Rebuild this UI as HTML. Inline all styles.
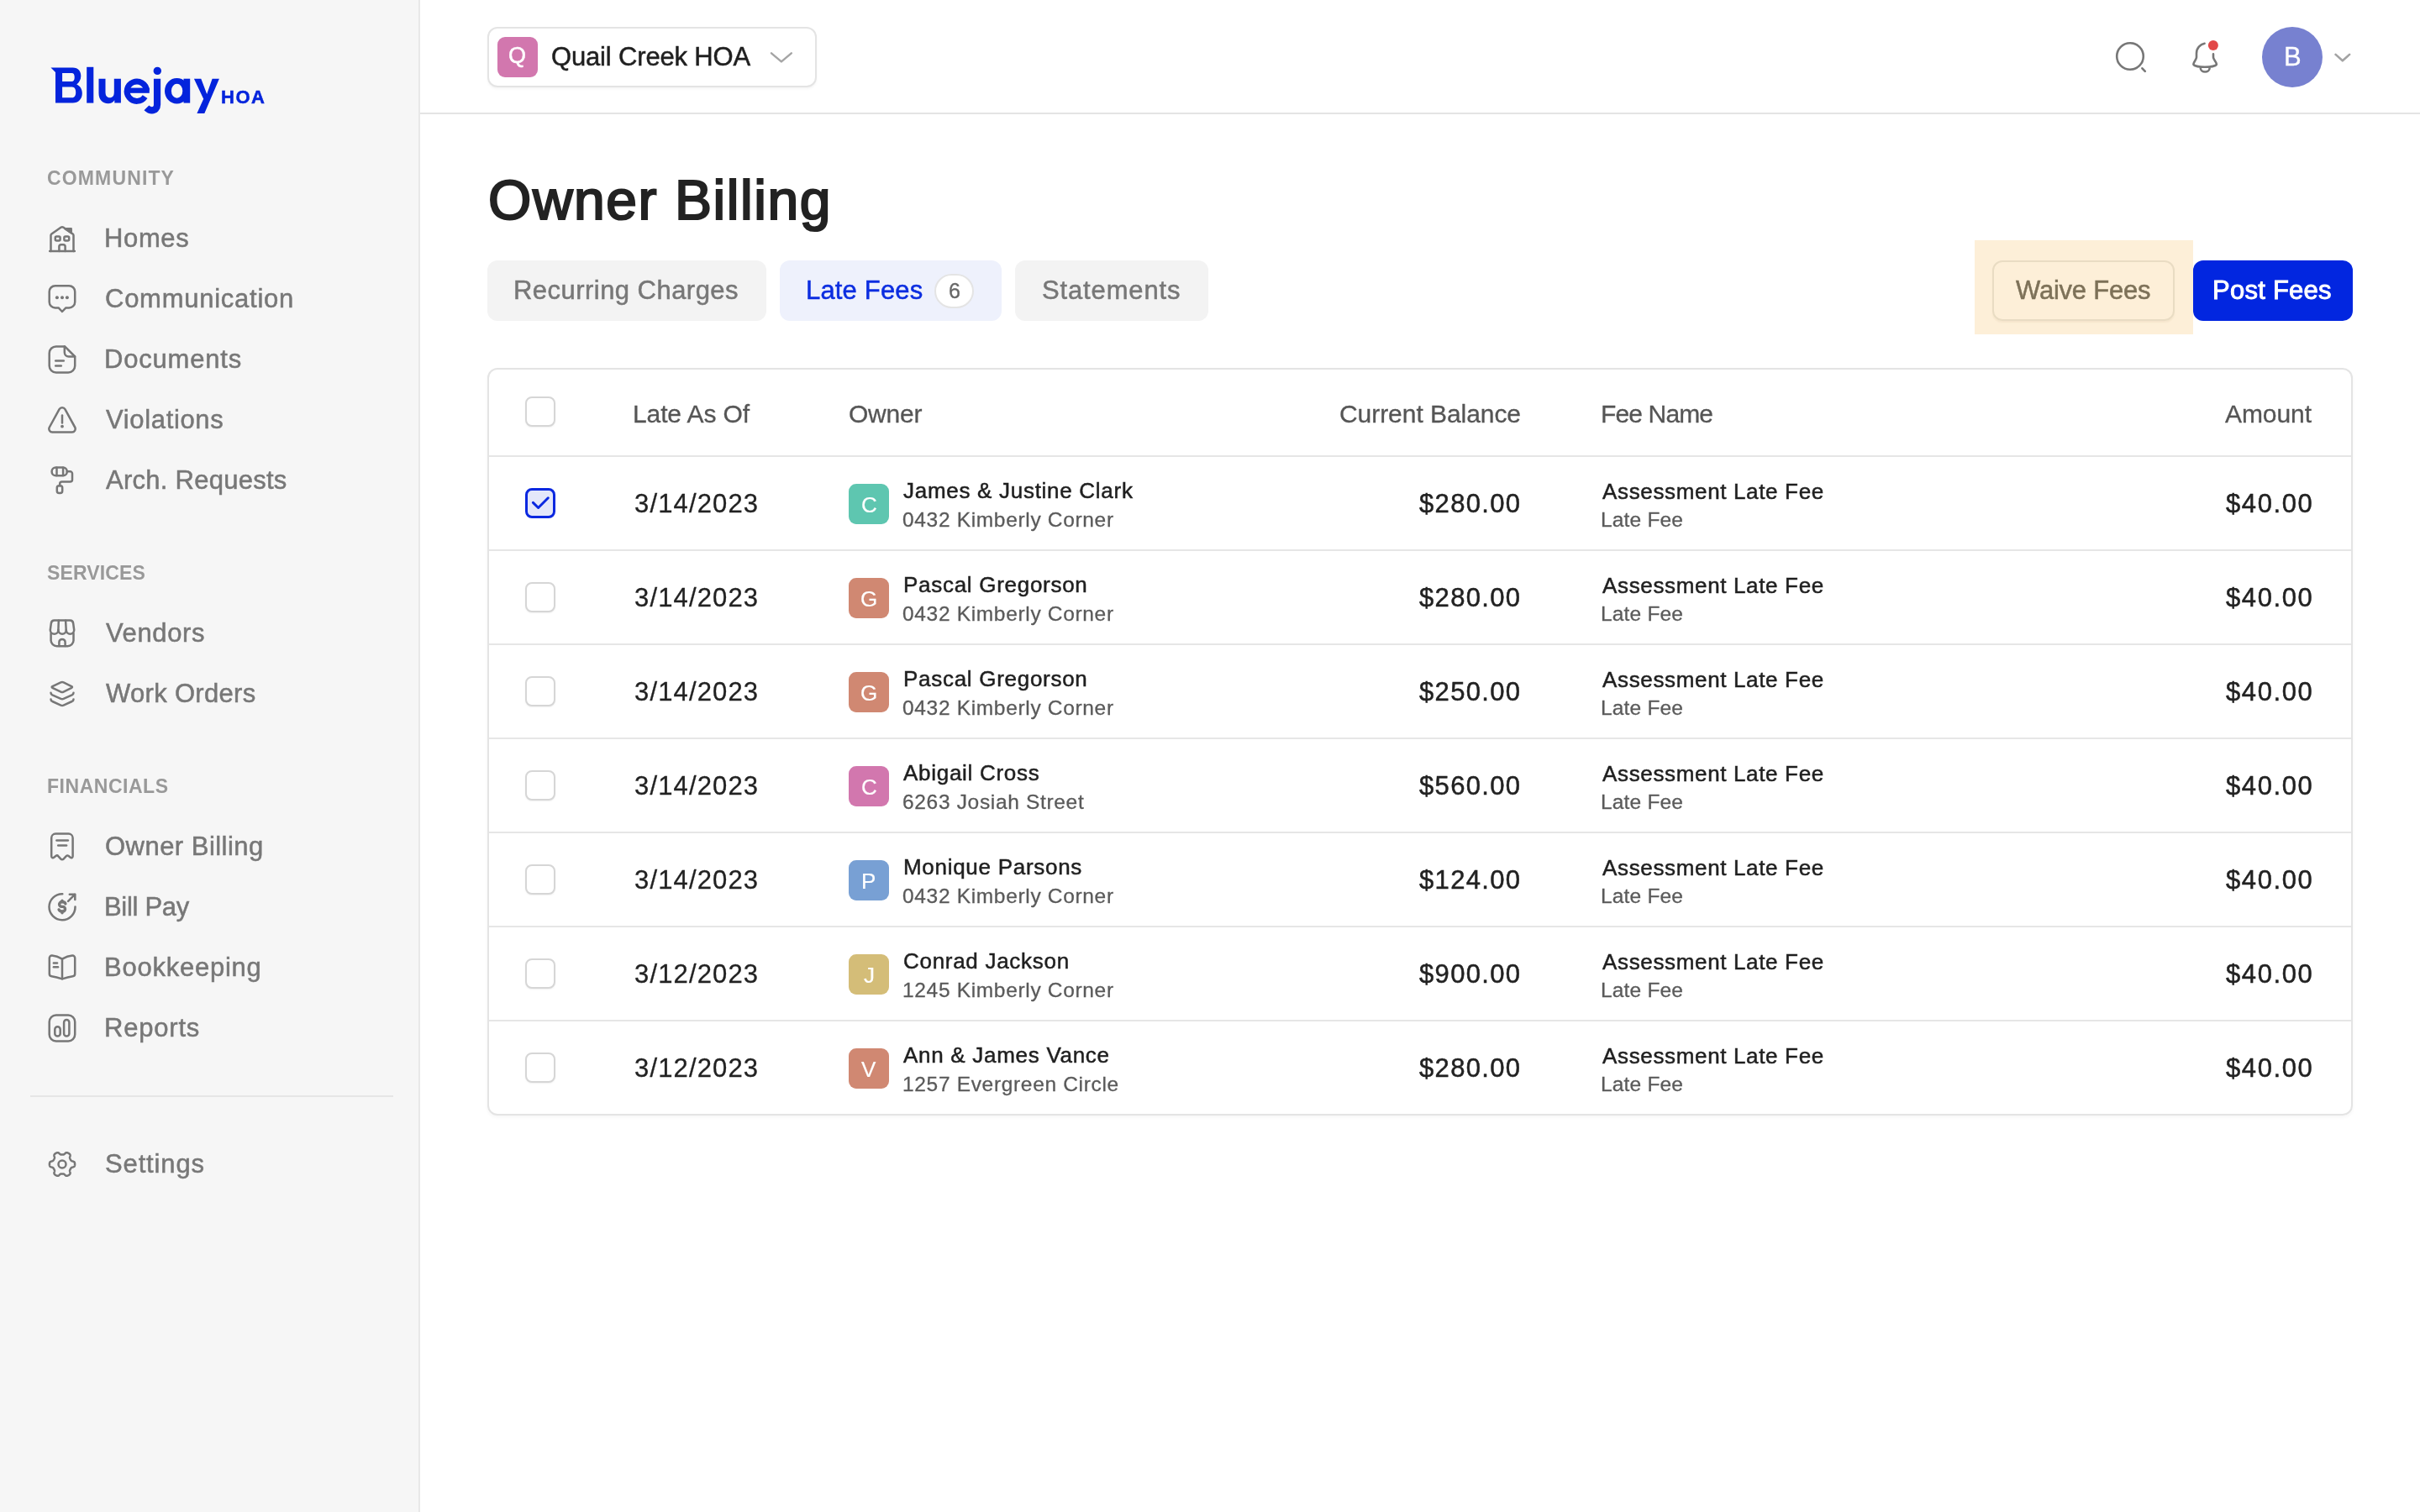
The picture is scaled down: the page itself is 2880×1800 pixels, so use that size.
<!DOCTYPE html>
<html><head><meta charset="utf-8"><title>Owner Billing</title>
<style>
html,body{margin:0;padding:0;}
body{width:2880px;height:1800px;overflow:hidden;position:relative;background:#ffffff;font-family:"Liberation Sans", sans-serif;}
.t{position:absolute;white-space:nowrap;will-change:transform;}
.b{position:absolute;box-sizing:border-box;}
.s{position:absolute;overflow:visible;}
@media (max-width: 2000px) { body{zoom:0.5;} }
</style></head><body>
<div class="b" style="left:0px;top:0px;width:498px;height:1800px;background:#f6f6f6"></div>
<div class="b" style="left:498px;top:0px;width:2px;height:1800px;background:#e8e8e8"></div>
<div class="b" style="left:500px;top:134px;width:2380px;height:2px;background:#e4e4e4"></div>
<svg class="s" style="left:0px;top:0px;" width="340" height="150" viewBox="0 0 340 150"><g fill="#0424dc"><path fill-rule="evenodd" d="M60.45 80.45H86.5C93.5 80.45 96.3 85 96.3 90.5C96.3 95 94 98.3 91.2 100.5C95.3 102.3 97.8 106 97.8 111C97.8 117.7 93.5 122.6 86.5 122.6H66V86ZM74.1 86.9H85.2C87.8 86.9 88.7 88.8 88.7 91.9C88.7 95.1 87.6 97 85.2 97H74.1ZM74.1 103.6H85.8C88.8 103.6 90.2 106.4 90.2 109.9C90.2 113.6 88.8 116.2 85.8 116.2H74.1Z"/><rect x="103.2" y="79.8" width="8.1" height="42.8"/><path d="M117.5 93.7H125.5V109.5C125.5 114 127.3 116.3 130.7 116.3C134.2 116.3 135.8 114 135.8 109.5V93.7H143.9V122.6H136.3V119.2C134.6 121.8 132 123.2 128.8 123.2C121.6 123.2 117.5 118.4 117.5 110.8Z"/><path d="M172.6 115.2A11.7 11.7 0 1 1 174.5 107.7" stroke="#0424dc" stroke-width="6.9" fill="none"/><rect x="151.5" y="104.6" width="26.3" height="6.2"/><path d="M187.05 93.7V124.5C187.05 128.8 184.5 131.4 180.8 131.4C178.3 131.4 176.3 130.3 174.4 128.4" stroke="#0424dc" stroke-width="8.2" fill="none"/><circle cx="187.3" cy="84.4" r="4.7"/><path fill-rule="evenodd" d="M196 108.2A14.5 15.3 0 1 0 225 108.2A14.5 15.3 0 1 0 196 108.2ZM203.9 108.2A6.7 8.5 0 1 0 217.3 108.2A6.7 8.5 0 1 0 203.9 108.2Z"/><rect x="218.5" y="93.7" width="7.7" height="28.9"/><path d="M230.9 93.7H239.3L246.2 112L252.6 93.7H260.9L243.3 135H234.4L242.2 117.8Z"/></g></svg>
<div class="t" style="left:263.20px;top:104.87px;font-size:22px;line-height:22px;letter-spacing:1.562px;color:#0424dc;font-weight:bold;-webkit-text-stroke:0.5px #0424dc;">HOA</div>
<div class="t" style="left:56.00px;top:200.68px;font-size:23px;line-height:23px;letter-spacing:1.141px;color:#999999;font-weight:bold;">COMMUNITY</div>
<div class="t" style="left:56.00px;top:670.68px;font-size:23px;line-height:23px;letter-spacing:0.125px;color:#999999;font-weight:bold;">SERVICES</div>
<div class="t" style="left:56.00px;top:924.68px;font-size:23px;line-height:23px;letter-spacing:0.528px;color:#999999;font-weight:bold;">FINANCIALS</div>
<div class="t" style="left:124.00px;top:267.96px;font-size:31px;line-height:31px;letter-spacing:0.625px;color:#777777;font-weight:normal;-webkit-text-stroke:0.5px #777777;">Homes</div>
<div class="t" style="left:125.00px;top:339.96px;font-size:31px;line-height:31px;letter-spacing:0.740px;color:#777777;font-weight:normal;-webkit-text-stroke:0.5px #777777;">Communication</div>
<div class="t" style="left:124.00px;top:411.96px;font-size:31px;line-height:31px;letter-spacing:0.813px;color:#777777;font-weight:normal;-webkit-text-stroke:0.5px #777777;">Documents</div>
<div class="t" style="left:126.00px;top:483.96px;font-size:31px;line-height:31px;letter-spacing:0.653px;color:#777777;font-weight:normal;-webkit-text-stroke:0.5px #777777;">Violations</div>
<div class="t" style="left:126.00px;top:555.96px;font-size:31px;line-height:31px;letter-spacing:0.260px;color:#777777;font-weight:normal;-webkit-text-stroke:0.5px #777777;">Arch. Requests</div>
<div class="t" style="left:126.00px;top:737.96px;font-size:31px;line-height:31px;letter-spacing:0.625px;color:#777777;font-weight:normal;-webkit-text-stroke:0.5px #777777;">Vendors</div>
<div class="t" style="left:126.00px;top:809.96px;font-size:31px;line-height:31px;letter-spacing:0.313px;color:#777777;font-weight:normal;-webkit-text-stroke:0.5px #777777;">Work Orders</div>
<div class="t" style="left:125.00px;top:991.96px;font-size:31px;line-height:31px;letter-spacing:0.469px;color:#777777;font-weight:normal;-webkit-text-stroke:0.5px #777777;">Owner Billing</div>
<div class="t" style="left:124.00px;top:1063.96px;font-size:31px;line-height:31px;letter-spacing:-0.304px;color:#777777;font-weight:normal;-webkit-text-stroke:0.5px #777777;">Bill Pay</div>
<div class="t" style="left:124.00px;top:1135.96px;font-size:31px;line-height:31px;letter-spacing:0.750px;color:#777777;font-weight:normal;-webkit-text-stroke:0.5px #777777;">Bookkeeping</div>
<div class="t" style="left:124.00px;top:1207.96px;font-size:31px;line-height:31px;letter-spacing:0.792px;color:#777777;font-weight:normal;-webkit-text-stroke:0.5px #777777;">Reports</div>
<div class="t" style="left:125.00px;top:1369.96px;font-size:31px;line-height:31px;letter-spacing:0.857px;color:#777777;font-weight:normal;-webkit-text-stroke:0.5px #777777;">Settings</div>
<div class="b" style="left:36px;top:1304px;width:432px;height:2px;background:#e6e6e6"></div>
<svg class="s" style="left:50px;top:260px;" width="50" height="50" viewBox="0 0 50 50"><g stroke="#777777" stroke-width="2.5" fill="none" stroke-linecap="round" stroke-linejoin="round"><path d="M9.2 39H38.8"/><path d="M10.5 39V20.3Q10.5 19.3 11.4 18.6L22.8 10.6Q24 9.8 25.2 10.6L36.6 18.6Q37.5 19.3 37.5 20.3V39"/><path d="M27.3 12.3H34.7V17.3Z" fill="#777"/><rect x="15.8" y="21.5" width="5.8" height="5.1" rx="1.5"/><rect x="26.4" y="21.5" width="5.8" height="5.1" rx="1.5"/><path d="M20.4 39V33.6a2.3 2.3 0 0 1 2.3 -2.3H25.3a2.3 2.3 0 0 1 2.3 2.3V39"/></g></svg>
<svg class="s" style="left:50px;top:330px;" width="50" height="50" viewBox="0 0 50 50"><g stroke="#777777" stroke-width="2.5" fill="none" stroke-linecap="round" stroke-linejoin="round"><path d="M15.7 10.2H32.2a7 7 0 0 1 7 7V29.4a7 7 0 0 1 -7 7H28.4L24 41L19.6 36.4H15.7a7 7 0 0 1 -7 -7V17.2a7 7 0 0 1 7 -7Z"/><g fill="#777" stroke="none"><circle cx="17.9" cy="24.3" r="2"/><circle cx="24" cy="24.3" r="2"/><circle cx="29.9" cy="24.3" r="2"/></g></g></svg>
<svg class="s" style="left:50px;top:402px;" width="50" height="50" viewBox="0 0 50 50"><g stroke="#777777" stroke-width="2.5" fill="none" stroke-linecap="round" stroke-linejoin="round"><path d="M27.1 10.4H16.7a8 8 0 0 0 -8 8V33.4a8 8 0 0 0 8 8H31.2a8 8 0 0 0 8 -8V22.5Z"/><path d="M26.8 10.6V17.6a5 5 0 0 0 5 5H39"/><path d="M16.2 27.4H25.8"/><path d="M16.2 33.4H22.8"/></g></svg>
<svg class="s" style="left:50px;top:474px;" width="50" height="50" viewBox="0 0 50 50"><g stroke="#777777" stroke-width="2.5" fill="none" stroke-linecap="round" stroke-linejoin="round"><path d="M20.6 13.2L8.9 34.5A4 4 0 0 0 12.4 40.5H35.6A4 4 0 0 0 39.1 34.5L27.4 13.2A3.9 3.9 0 0 0 20.6 13.2Z"/><path d="M24 20.5V29.4"/><circle cx="24" cy="33.6" r="1.9" fill="#777" stroke="none"/></g></svg>
<svg class="s" style="left:50px;top:546px;" width="50" height="50" viewBox="0 0 50 50"><g stroke="#777777" stroke-width="2.5" fill="none" stroke-linecap="round" stroke-linejoin="round"><rect x="11.6" y="10.6" width="18.2" height="9.6" rx="4.8"/><path d="M17.5 10.8V20"/><path d="M25.1 10.8V20"/><path d="M29.8 15.3H33.5a2.5 2.5 0 0 1 2.5 2.5V25a2.5 2.5 0 0 1 -2.5 2.5H23.7a2.5 2.5 0 0 0 -2.5 2.5V32.2"/><rect x="17.8" y="32.2" width="6.4" height="8.8" rx="2.5"/></g></svg>
<svg class="s" style="left:50px;top:728px;" width="50" height="50" viewBox="0 0 50 50"><g stroke="#777777" stroke-width="2.5" fill="none" stroke-linecap="round" stroke-linejoin="round"><path d="M9.8 22L10.8 14.3A4 4 0 0 1 14.7 10.6H33.3A4 4 0 0 1 37.2 14.3L38.2 22A4.7 4.7 0 0 1 28.8 22A4.7 4.7 0 0 1 19.4 22A4.7 4.7 0 0 1 9.8 22Z"/><path d="M19.8 10.8L19.4 22"/><path d="M28.1 10.8L28.7 22"/><path d="M10.6 26V34.2a7 7 0 0 0 7 7H30.5a7 7 0 0 0 7 -7V26"/><path d="M20.4 41V36.5a3.6 3.6 0 0 1 7.2 0V41"/></g></svg>
<svg class="s" style="left:50px;top:800px;" width="50" height="50" viewBox="0 0 50 50"><g stroke="#777777" stroke-width="2.5" fill="none" stroke-linecap="round" stroke-linejoin="round"><path d="M22.4 12.4Q24 11.6 25.6 12.4L35.2 17.2Q36.7 18 35.2 18.8L25.6 23.6Q24 24.4 22.4 23.6L12.4 18.8Q10.9 18 12.4 17.2Z"/><path d="M10.5 24.7Q10.5 26.4 12.3 27.3L22.4 31.9Q24 32.6 25.6 31.9L35.7 27.3Q37.5 26.4 37.5 24.7"/><path d="M10.5 32.4Q10.5 34.1 12.3 35L22.4 39.6Q24 40.3 25.6 39.6L35.7 35Q37.5 34.1 37.5 32.4"/></g></svg>
<svg class="s" style="left:50px;top:982px;" width="50" height="50" viewBox="0 0 50 50"><g stroke="#777777" stroke-width="2.5" fill="none" stroke-linecap="round" stroke-linejoin="round"><path d="M36.6 15.6V37.2C36.6 39 35 39.8 33.8 38.8L31.6 37C30.6 36.2 29.4 36.3 28.6 37.3L25.6 40.6C24.8 41.5 23.2 41.5 22.4 40.6L19.4 37.3C18.6 36.3 17.4 36.2 16.4 37L14.2 38.8C13 39.8 11.2 39 11.2 37.2V15.6a5 5 0 0 1 5 -5H31.6a5 5 0 0 1 5 5Z"/><path d="M17.4 18.4H30.9"/><path d="M19.2 24.5H29.1"/></g></svg>
<svg class="s" style="left:50px;top:1054px;" width="50" height="50" viewBox="0 0 50 50"><g stroke="#777777" stroke-width="2.5" fill="none" stroke-linecap="round" stroke-linejoin="round"><path d="M24.3 10.2A15.5 15.5 0 1 0 39.5 25.4"/><path d="M31.1 18.8L39 10.9"/><path d="M32.8 10.7H39.3V17.1"/><g stroke-width="3.4"><path d="M27.9 21.9a3.6 3 0 0 0 -3.3 -2.1h-1.2a2.8 2.8 0 0 0 0 5.6h1.3a2.8 2.8 0 0 1 0 5.6h-1.3a3.6 3 0 0 1 -3.3 -2.1"/><path d="M24 18.2V19.6"/><path d="M24 31.2V32.7"/></g></g></svg>
<svg class="s" style="left:50px;top:1126px;" width="50" height="50" viewBox="0 0 50 50"><g stroke="#777777" stroke-width="2.5" fill="none" stroke-linecap="round" stroke-linejoin="round"><path d="M24 15.6C20.5 13.6 15.5 11.9 11.9 11.6A3 3 0 0 0 8.8 14.6V33.2A3 3 0 0 0 11.4 36.2C15.5 36.8 20.5 38.2 24 39.4C27.5 38.2 32.5 36.8 36.6 36.2A3 3 0 0 0 39.2 33.2V14.6A3 3 0 0 0 36.1 11.6C32.5 11.9 27.5 13.6 24 15.6Z"/><path d="M24 15.6V39.2"/><path d="M13.9 20.5H18"/><path d="M13.9 25.3H19"/></g></svg>
<svg class="s" style="left:50px;top:1198px;" width="50" height="50" viewBox="0 0 50 50"><g stroke="#777777" stroke-width="2.5" fill="none" stroke-linecap="round" stroke-linejoin="round"><rect x="8.7" y="10.6" width="30.5" height="30.8" rx="8"/><rect x="15.3" y="24.3" width="6.4" height="11.3" rx="3.2"/><rect x="26.1" y="16" width="6.3" height="19.6" rx="3.15"/></g></svg>
<svg class="s" style="left:50px;top:1360px;" width="50" height="50" viewBox="0 0 50 50"><g stroke="#777777" stroke-width="2.5" fill="none" stroke-linecap="round" stroke-linejoin="round"><path d="M39.10 26.00 L39.09 26.40 L39.06 26.79 L39.02 27.18 L38.94 27.57 L38.83 27.95 L38.65 28.32 L38.39 28.67 L37.99 28.97 L37.45 29.23 L36.80 29.43 L36.15 29.60 L35.60 29.77 L35.19 29.96 L34.89 30.18 L34.67 30.42 L34.48 30.67 L34.32 30.92 L34.17 31.18 L34.02 31.44 L33.87 31.70 L33.72 31.96 L33.57 32.22 L33.43 32.48 L33.28 32.75 L33.16 33.03 L33.07 33.34 L33.02 33.71 L33.06 34.16 L33.19 34.72 L33.37 35.37 L33.52 36.03 L33.57 36.63 L33.50 37.13 L33.34 37.53 L33.10 37.86 L32.83 38.15 L32.53 38.41 L32.22 38.65 L31.89 38.87 L31.55 39.08 L31.20 39.27 L30.85 39.44 L30.48 39.60 L30.11 39.72 L29.72 39.82 L29.32 39.85 L28.88 39.79 L28.42 39.60 L27.93 39.26 L27.43 38.80 L26.96 38.32 L26.54 37.93 L26.16 37.67 L25.82 37.52 L25.51 37.45 L25.20 37.41 L24.90 37.40 L24.60 37.40 L24.30 37.40 L24.00 37.40 L23.70 37.40 L23.40 37.40 L23.10 37.40 L22.80 37.41 L22.49 37.45 L22.18 37.52 L21.84 37.67 L21.46 37.93 L21.04 38.32 L20.57 38.80 L20.07 39.26 L19.58 39.60 L19.12 39.79 L18.68 39.85 L18.28 39.82 L17.89 39.72 L17.52 39.60 L17.15 39.44 L16.80 39.27 L16.45 39.08 L16.11 38.87 L15.78 38.65 L15.47 38.41 L15.17 38.15 L14.90 37.86 L14.66 37.53 L14.50 37.13 L14.43 36.63 L14.48 36.03 L14.63 35.37 L14.81 34.72 L14.94 34.16 L14.98 33.71 L14.93 33.34 L14.84 33.03 L14.72 32.75 L14.57 32.48 L14.43 32.22 L14.28 31.96 L14.13 31.70 L13.98 31.44 L13.83 31.18 L13.68 30.92 L13.52 30.67 L13.33 30.42 L13.11 30.18 L12.81 29.96 L12.40 29.77 L11.85 29.60 L11.20 29.43 L10.55 29.23 L10.01 28.97 L9.61 28.67 L9.35 28.32 L9.17 27.95 L9.06 27.57 L8.98 27.18 L8.94 26.79 L8.91 26.40 L8.90 26.00 L8.91 25.60 L8.94 25.21 L8.98 24.82 L9.06 24.43 L9.17 24.05 L9.35 23.68 L9.61 23.33 L10.01 23.03 L10.55 22.77 L11.20 22.57 L11.85 22.40 L12.40 22.23 L12.81 22.04 L13.11 21.82 L13.33 21.58 L13.52 21.33 L13.68 21.08 L13.83 20.82 L13.98 20.56 L14.13 20.30 L14.28 20.04 L14.43 19.78 L14.57 19.52 L14.72 19.25 L14.84 18.97 L14.93 18.66 L14.98 18.29 L14.94 17.84 L14.81 17.28 L14.63 16.63 L14.48 15.97 L14.43 15.37 L14.50 14.87 L14.66 14.47 L14.90 14.14 L15.17 13.85 L15.47 13.59 L15.78 13.35 L16.11 13.13 L16.45 12.92 L16.80 12.73 L17.15 12.56 L17.52 12.40 L17.89 12.28 L18.28 12.18 L18.68 12.15 L19.12 12.21 L19.58 12.40 L20.07 12.74 L20.57 13.20 L21.04 13.68 L21.46 14.07 L21.84 14.33 L22.18 14.48 L22.49 14.55 L22.80 14.59 L23.10 14.60 L23.40 14.60 L23.70 14.60 L24.00 14.60 L24.30 14.60 L24.60 14.60 L24.90 14.60 L25.20 14.59 L25.51 14.55 L25.82 14.48 L26.16 14.33 L26.54 14.07 L26.96 13.68 L27.43 13.20 L27.93 12.74 L28.42 12.40 L28.88 12.21 L29.32 12.15 L29.72 12.18 L30.11 12.28 L30.48 12.40 L30.85 12.56 L31.20 12.73 L31.55 12.92 L31.89 13.13 L32.22 13.35 L32.53 13.59 L32.83 13.85 L33.10 14.14 L33.34 14.47 L33.50 14.87 L33.57 15.37 L33.52 15.97 L33.37 16.63 L33.19 17.28 L33.06 17.84 L33.02 18.29 L33.07 18.66 L33.16 18.97 L33.28 19.25 L33.43 19.52 L33.57 19.78 L33.72 20.04 L33.87 20.30 L34.02 20.56 L34.17 20.82 L34.32 21.08 L34.48 21.33 L34.67 21.58 L34.89 21.82 L35.19 22.04 L35.60 22.23 L36.15 22.40 L36.80 22.57 L37.45 22.77 L37.99 23.03 L38.39 23.33 L38.65 23.68 L38.83 24.05 L38.94 24.43 L39.02 24.82 L39.06 25.21 L39.09 25.60 L39.10 26.00Z"/><circle cx="24" cy="26" r="4.5"/></g></svg>
<div class="b" style="left:580px;top:32px;width:392px;height:72px;border:2px solid #e4e4e4;border-radius:12px;box-sizing:border-box;background:#fff;box-shadow:0 2px 3px rgba(0,0,0,0.04)"></div>
<div class="b" style="left:592px;top:44px;width:48px;height:48px;background:#d277ae;border-radius:9px"></div>
<div class="t" style="left:604.75px;top:52.92px;font-size:27px;line-height:27px;letter-spacing:0.000px;color:#ffffff;font-weight:normal;-webkit-text-stroke:0.5px #ffffff;">Q</div>
<div class="t" style="left:656.25px;top:51.96px;font-size:31px;line-height:31px;letter-spacing:-0.161px;color:#1f1f1f;font-weight:normal;-webkit-text-stroke:0.5px #1f1f1f;">Quail Creek HOA</div>
<svg class="s" style="left:900px;top:50px;" width="60" height="40" viewBox="0 0 60 40"><path d="M18 13.4L29.9 23.4L41.8 13.4" stroke="#a5a5a5" stroke-width="2.5" fill="none" stroke-linecap="round" stroke-linejoin="round"/></svg>
<svg class="s" style="left:2500px;top:30px;" width="160" height="80" viewBox="0 0 160 80"><g stroke="#777777" stroke-width="2.6" fill="none" stroke-linecap="round" stroke-linejoin="round"><circle cx="35" cy="37" r="15.8"/><path d="M49.4 51.3L52.8 54.8"/><path d="M123.6 21.8C118.5 22.8 114 27 114 33.5V38.3C114 41 110.4 43.8 110.4 46.3C110.4 48.5 117 49.8 124 49.8C131 49.8 137.9 48.5 137.9 46.3C137.9 43.8 134 41 134 38.3V34.4"/><path d="M118.8 51.2a5.4 4.3 0 0 0 10.8 0"/></g><circle cx="133.9" cy="23.9" r="6" fill="#e24848"/></svg>
<div class="b" style="left:2692px;top:32px;width:72px;height:72px;background:#7781d0;border-radius:50%"></div>
<div class="t" style="left:2717.75px;top:51.71px;font-size:31px;line-height:31px;letter-spacing:0.000px;color:#ffffff;font-weight:normal;-webkit-text-stroke:0.3px #ffffff;">B</div>
<svg class="s" style="left:2770px;top:55px;" width="40" height="30" viewBox="0 0 40 30"><path d="M9.6 9.9L17.85 17.3L26.1 9.9" stroke="#a3a3a3" stroke-width="2.6" fill="none" stroke-linecap="round" stroke-linejoin="round"/></svg>
<div class="t" style="left:580.75px;top:205.06px;font-size:66px;line-height:66px;letter-spacing:1.552px;color:#222222;font-weight:normal;-webkit-text-stroke:2.2px #222222;">Owner Billing</div>
<div class="b" style="left:580px;top:310px;width:332px;height:72px;background:#f3f3f3;border-radius:12px"></div>
<div class="t" style="left:611.00px;top:329.96px;font-size:31px;line-height:31px;letter-spacing:0.461px;color:#777777;font-weight:normal;-webkit-text-stroke:0.5px #777777;">Recurring Charges</div>
<div class="b" style="left:928px;top:310px;width:264px;height:72px;background:#eef1fc;border-radius:12px"></div>
<div class="t" style="left:959.25px;top:329.96px;font-size:31px;line-height:31px;letter-spacing:0.172px;color:#0b2de0;font-weight:normal;-webkit-text-stroke:0.5px #0b2de0;">Late Fees</div>
<div class="b" style="left:1112px;top:325.5px;width:47px;height:41px;background:#fff;border:2px solid #e4e4e4;border-radius:21px;box-sizing:border-box"></div>
<div class="t" style="left:1128.86px;top:334.30px;font-size:25px;line-height:25px;color:#666666;font-weight:normal;-webkit-text-stroke:0.3px #666666;">6</div>
<div class="b" style="left:1208px;top:310px;width:230px;height:72px;background:#f3f3f3;border-radius:12px"></div>
<div class="t" style="left:1240.00px;top:329.96px;font-size:31px;line-height:31px;letter-spacing:0.861px;color:#777777;font-weight:normal;-webkit-text-stroke:0.5px #777777;">Statements</div>
<div class="b" style="left:2350px;top:286px;width:260px;height:112px;background:#fdefd8"></div>
<div class="b" style="left:2371px;top:310px;width:217px;height:72px;border:2px solid #e9dcc3;border-radius:12px;box-sizing:border-box;box-shadow:0 2px 2px rgba(120,90,30,0.06)"></div>
<div class="t" style="left:2399.00px;top:329.71px;font-size:31px;line-height:31px;letter-spacing:-0.222px;color:#7d7158;font-weight:normal;-webkit-text-stroke:0.5px #7d7158;">Waive Fees</div>
<div class="b" style="left:2610px;top:310px;width:190px;height:72px;background:#0226e0;border-radius:12px"></div>
<div class="t" style="left:2633.00px;top:329.71px;font-size:31px;line-height:31px;letter-spacing:0.250px;color:#ffffff;font-weight:normal;-webkit-text-stroke:0.9px #ffffff;">Post Fees</div>
<div class="b" style="left:580px;top:438px;width:2220px;height:890px;border:2px solid #e4e4e4;border-radius:12px;box-sizing:border-box;background:#fff;box-shadow:0 2px 4px rgba(0,0,0,0.04)"></div>
<div class="b" style="left:582px;top:542px;width:2216px;height:2px;background:#e6e6e6"></div>
<div class="b" style="left:582px;top:654px;width:2216px;height:2px;background:#e6e6e6"></div>
<div class="b" style="left:582px;top:766px;width:2216px;height:2px;background:#e6e6e6"></div>
<div class="b" style="left:582px;top:878px;width:2216px;height:2px;background:#e6e6e6"></div>
<div class="b" style="left:582px;top:990px;width:2216px;height:2px;background:#e6e6e6"></div>
<div class="b" style="left:582px;top:1102px;width:2216px;height:2px;background:#e6e6e6"></div>
<div class="b" style="left:582px;top:1214px;width:2216px;height:2px;background:#e6e6e6"></div>
<div class="b" style="left:625px;top:472px;width:36px;height:36px;border:2px solid #d6d6d6;border-radius:8px;box-sizing:border-box;background:#fff;box-shadow:0 1px 2px rgba(0,0,0,0.06)"></div>
<div class="t" style="left:753.25px;top:477.55px;font-size:30px;line-height:30px;letter-spacing:-0.111px;color:#555555;font-weight:normal;-webkit-text-stroke:0.3px #555555;">Late As Of</div>
<div class="t" style="left:1010.00px;top:477.55px;font-size:30px;line-height:30px;letter-spacing:-0.219px;color:#555555;font-weight:normal;-webkit-text-stroke:0.3px #555555;">Owner</div>
<div class="t" style="left:1594.00px;top:477.55px;font-size:30px;line-height:30px;letter-spacing:-0.054px;color:#555555;font-weight:normal;-webkit-text-stroke:0.3px #555555;">Current Balance</div>
<div class="t" style="left:1905.25px;top:477.55px;font-size:30px;line-height:30px;letter-spacing:-0.857px;color:#555555;font-weight:normal;-webkit-text-stroke:0.3px #555555;">Fee Name</div>
<div class="t" style="left:2648.00px;top:477.55px;font-size:30px;line-height:30px;letter-spacing:-0.075px;color:#555555;font-weight:normal;-webkit-text-stroke:0.3px #555555;">Amount</div>
<div class="b" style="left:625px;top:581px;width:36px;height:36px;border:3px solid #0b28e0;border-radius:8px;box-sizing:border-box;background:#e4e7fa"></div>
<svg class="s" style="left:625px;top:581px;" width="36" height="36" viewBox="0 0 36 36"><path d="M9.4 17.4L15.6 23.5L27.3 11.8" stroke="#0b28e0" stroke-width="3" fill="none" stroke-linecap="round" stroke-linejoin="round"/></svg>
<div class="t" style="left:755.00px;top:583.96px;font-size:31px;line-height:31px;letter-spacing:1.141px;color:#222222;font-weight:normal;-webkit-text-stroke:0.3px #222222;">3/14/2023</div>
<div class="b" style="left:1010px;top:576px;width:48px;height:48px;background:#5ec6b0;border-radius:9px"></div>
<div class="t" style="left:1024.62px;top:587.66px;font-size:26px;line-height:26px;color:#ffffff;font-weight:normal;-webkit-text-stroke:0.2px #ffffff;">C</div>
<div class="t" style="left:1075.00px;top:570.66px;font-size:26px;line-height:26px;letter-spacing:0.712px;color:#1f1f1f;font-weight:normal;-webkit-text-stroke:0.5px #1f1f1f;">James &amp; Justine Clark</div>
<div class="t" style="left:1074.00px;top:607.42px;font-size:24.5px;line-height:24.5px;letter-spacing:0.671px;color:#5a5a5a;font-weight:normal;-webkit-text-stroke:0.3px #5a5a5a;">0432 Kimberly Corner</div>
<div class="t" style="left:1689.00px;top:583.96px;font-size:31px;line-height:31px;letter-spacing:1.333px;color:#222222;font-weight:normal;-webkit-text-stroke:0.5px #222222;">$280.00</div>
<div class="t" style="left:1907.25px;top:571.66px;font-size:26px;line-height:26px;letter-spacing:0.653px;color:#1f1f1f;font-weight:normal;-webkit-text-stroke:0.5px #1f1f1f;">Assessment Late Fee</div>
<div class="t" style="left:1905.25px;top:606.67px;font-size:24.5px;line-height:24.5px;letter-spacing:0.179px;color:#5a5a5a;font-weight:normal;-webkit-text-stroke:0.3px #5a5a5a;">Late Fee</div>
<div class="t" style="left:2649.00px;top:583.96px;font-size:31px;line-height:31px;letter-spacing:1.575px;color:#222222;font-weight:normal;-webkit-text-stroke:0.5px #222222;">$40.00</div>
<div class="b" style="left:625px;top:693px;width:36px;height:36px;border:2px solid #d6d6d6;border-radius:8px;box-sizing:border-box;background:#fff;box-shadow:0 1px 2px rgba(0,0,0,0.06)"></div>
<div class="t" style="left:755.00px;top:695.96px;font-size:31px;line-height:31px;letter-spacing:1.141px;color:#222222;font-weight:normal;-webkit-text-stroke:0.3px #222222;">3/14/2023</div>
<div class="b" style="left:1010px;top:688px;width:48px;height:48px;background:#d08872;border-radius:9px"></div>
<div class="t" style="left:1023.88px;top:699.66px;font-size:26px;line-height:26px;color:#ffffff;font-weight:normal;-webkit-text-stroke:0.2px #ffffff;">G</div>
<div class="t" style="left:1075.00px;top:682.66px;font-size:26px;line-height:26px;letter-spacing:0.712px;color:#1f1f1f;font-weight:normal;-webkit-text-stroke:0.5px #1f1f1f;">Pascal Gregorson</div>
<div class="t" style="left:1074.00px;top:719.42px;font-size:24.5px;line-height:24.5px;letter-spacing:0.671px;color:#5a5a5a;font-weight:normal;-webkit-text-stroke:0.3px #5a5a5a;">0432 Kimberly Corner</div>
<div class="t" style="left:1689.00px;top:695.96px;font-size:31px;line-height:31px;letter-spacing:1.333px;color:#222222;font-weight:normal;-webkit-text-stroke:0.5px #222222;">$280.00</div>
<div class="t" style="left:1907.25px;top:683.66px;font-size:26px;line-height:26px;letter-spacing:0.653px;color:#1f1f1f;font-weight:normal;-webkit-text-stroke:0.5px #1f1f1f;">Assessment Late Fee</div>
<div class="t" style="left:1905.25px;top:718.67px;font-size:24.5px;line-height:24.5px;letter-spacing:0.179px;color:#5a5a5a;font-weight:normal;-webkit-text-stroke:0.3px #5a5a5a;">Late Fee</div>
<div class="t" style="left:2649.00px;top:695.96px;font-size:31px;line-height:31px;letter-spacing:1.575px;color:#222222;font-weight:normal;-webkit-text-stroke:0.5px #222222;">$40.00</div>
<div class="b" style="left:625px;top:805px;width:36px;height:36px;border:2px solid #d6d6d6;border-radius:8px;box-sizing:border-box;background:#fff;box-shadow:0 1px 2px rgba(0,0,0,0.06)"></div>
<div class="t" style="left:755.00px;top:807.96px;font-size:31px;line-height:31px;letter-spacing:1.141px;color:#222222;font-weight:normal;-webkit-text-stroke:0.3px #222222;">3/14/2023</div>
<div class="b" style="left:1010px;top:800px;width:48px;height:48px;background:#d08872;border-radius:9px"></div>
<div class="t" style="left:1023.88px;top:811.66px;font-size:26px;line-height:26px;color:#ffffff;font-weight:normal;-webkit-text-stroke:0.2px #ffffff;">G</div>
<div class="t" style="left:1075.00px;top:794.66px;font-size:26px;line-height:26px;letter-spacing:0.712px;color:#1f1f1f;font-weight:normal;-webkit-text-stroke:0.5px #1f1f1f;">Pascal Gregorson</div>
<div class="t" style="left:1074.00px;top:831.42px;font-size:24.5px;line-height:24.5px;letter-spacing:0.671px;color:#5a5a5a;font-weight:normal;-webkit-text-stroke:0.3px #5a5a5a;">0432 Kimberly Corner</div>
<div class="t" style="left:1689.00px;top:807.96px;font-size:31px;line-height:31px;letter-spacing:1.333px;color:#222222;font-weight:normal;-webkit-text-stroke:0.5px #222222;">$250.00</div>
<div class="t" style="left:1907.25px;top:795.66px;font-size:26px;line-height:26px;letter-spacing:0.653px;color:#1f1f1f;font-weight:normal;-webkit-text-stroke:0.5px #1f1f1f;">Assessment Late Fee</div>
<div class="t" style="left:1905.25px;top:830.67px;font-size:24.5px;line-height:24.5px;letter-spacing:0.179px;color:#5a5a5a;font-weight:normal;-webkit-text-stroke:0.3px #5a5a5a;">Late Fee</div>
<div class="t" style="left:2649.00px;top:807.96px;font-size:31px;line-height:31px;letter-spacing:1.575px;color:#222222;font-weight:normal;-webkit-text-stroke:0.5px #222222;">$40.00</div>
<div class="b" style="left:625px;top:917px;width:36px;height:36px;border:2px solid #d6d6d6;border-radius:8px;box-sizing:border-box;background:#fff;box-shadow:0 1px 2px rgba(0,0,0,0.06)"></div>
<div class="t" style="left:755.00px;top:919.96px;font-size:31px;line-height:31px;letter-spacing:1.141px;color:#222222;font-weight:normal;-webkit-text-stroke:0.3px #222222;">3/14/2023</div>
<div class="b" style="left:1010px;top:912px;width:48px;height:48px;background:#d277ae;border-radius:9px"></div>
<div class="t" style="left:1024.62px;top:923.66px;font-size:26px;line-height:26px;color:#ffffff;font-weight:normal;-webkit-text-stroke:0.2px #ffffff;">C</div>
<div class="t" style="left:1075.00px;top:906.66px;font-size:26px;line-height:26px;letter-spacing:0.712px;color:#1f1f1f;font-weight:normal;-webkit-text-stroke:0.5px #1f1f1f;">Abigail Cross</div>
<div class="t" style="left:1074.00px;top:943.42px;font-size:24.5px;line-height:24.5px;letter-spacing:0.671px;color:#5a5a5a;font-weight:normal;-webkit-text-stroke:0.3px #5a5a5a;">6263 Josiah Street</div>
<div class="t" style="left:1689.00px;top:919.96px;font-size:31px;line-height:31px;letter-spacing:1.333px;color:#222222;font-weight:normal;-webkit-text-stroke:0.5px #222222;">$560.00</div>
<div class="t" style="left:1907.25px;top:907.66px;font-size:26px;line-height:26px;letter-spacing:0.653px;color:#1f1f1f;font-weight:normal;-webkit-text-stroke:0.5px #1f1f1f;">Assessment Late Fee</div>
<div class="t" style="left:1905.25px;top:942.67px;font-size:24.5px;line-height:24.5px;letter-spacing:0.179px;color:#5a5a5a;font-weight:normal;-webkit-text-stroke:0.3px #5a5a5a;">Late Fee</div>
<div class="t" style="left:2649.00px;top:919.96px;font-size:31px;line-height:31px;letter-spacing:1.575px;color:#222222;font-weight:normal;-webkit-text-stroke:0.5px #222222;">$40.00</div>
<div class="b" style="left:625px;top:1029px;width:36px;height:36px;border:2px solid #d6d6d6;border-radius:8px;box-sizing:border-box;background:#fff;box-shadow:0 1px 2px rgba(0,0,0,0.06)"></div>
<div class="t" style="left:755.00px;top:1031.96px;font-size:31px;line-height:31px;letter-spacing:1.141px;color:#222222;font-weight:normal;-webkit-text-stroke:0.3px #222222;">3/14/2023</div>
<div class="b" style="left:1010px;top:1024px;width:48px;height:48px;background:#78a0d4;border-radius:9px"></div>
<div class="t" style="left:1025.31px;top:1035.66px;font-size:26px;line-height:26px;color:#ffffff;font-weight:normal;-webkit-text-stroke:0.2px #ffffff;">P</div>
<div class="t" style="left:1075.00px;top:1018.66px;font-size:26px;line-height:26px;letter-spacing:0.712px;color:#1f1f1f;font-weight:normal;-webkit-text-stroke:0.5px #1f1f1f;">Monique Parsons</div>
<div class="t" style="left:1074.00px;top:1055.42px;font-size:24.5px;line-height:24.5px;letter-spacing:0.671px;color:#5a5a5a;font-weight:normal;-webkit-text-stroke:0.3px #5a5a5a;">0432 Kimberly Corner</div>
<div class="t" style="left:1689.00px;top:1031.96px;font-size:31px;line-height:31px;letter-spacing:1.333px;color:#222222;font-weight:normal;-webkit-text-stroke:0.5px #222222;">$124.00</div>
<div class="t" style="left:1907.25px;top:1019.66px;font-size:26px;line-height:26px;letter-spacing:0.653px;color:#1f1f1f;font-weight:normal;-webkit-text-stroke:0.5px #1f1f1f;">Assessment Late Fee</div>
<div class="t" style="left:1905.25px;top:1054.67px;font-size:24.5px;line-height:24.5px;letter-spacing:0.179px;color:#5a5a5a;font-weight:normal;-webkit-text-stroke:0.3px #5a5a5a;">Late Fee</div>
<div class="t" style="left:2649.00px;top:1031.96px;font-size:31px;line-height:31px;letter-spacing:1.575px;color:#222222;font-weight:normal;-webkit-text-stroke:0.5px #222222;">$40.00</div>
<div class="b" style="left:625px;top:1141px;width:36px;height:36px;border:2px solid #d6d6d6;border-radius:8px;box-sizing:border-box;background:#fff;box-shadow:0 1px 2px rgba(0,0,0,0.06)"></div>
<div class="t" style="left:755.00px;top:1143.96px;font-size:31px;line-height:31px;letter-spacing:1.141px;color:#222222;font-weight:normal;-webkit-text-stroke:0.3px #222222;">3/12/2023</div>
<div class="b" style="left:1010px;top:1136px;width:48px;height:48px;background:#d4bd78;border-radius:9px"></div>
<div class="t" style="left:1027.50px;top:1147.66px;font-size:26px;line-height:26px;color:#ffffff;font-weight:normal;-webkit-text-stroke:0.2px #ffffff;">J</div>
<div class="t" style="left:1075.00px;top:1130.66px;font-size:26px;line-height:26px;letter-spacing:0.712px;color:#1f1f1f;font-weight:normal;-webkit-text-stroke:0.5px #1f1f1f;">Conrad Jackson</div>
<div class="t" style="left:1074.00px;top:1167.42px;font-size:24.5px;line-height:24.5px;letter-spacing:0.671px;color:#5a5a5a;font-weight:normal;-webkit-text-stroke:0.3px #5a5a5a;">1245 Kimberly Corner</div>
<div class="t" style="left:1689.00px;top:1143.96px;font-size:31px;line-height:31px;letter-spacing:1.333px;color:#222222;font-weight:normal;-webkit-text-stroke:0.5px #222222;">$900.00</div>
<div class="t" style="left:1907.25px;top:1131.66px;font-size:26px;line-height:26px;letter-spacing:0.653px;color:#1f1f1f;font-weight:normal;-webkit-text-stroke:0.5px #1f1f1f;">Assessment Late Fee</div>
<div class="t" style="left:1905.25px;top:1166.67px;font-size:24.5px;line-height:24.5px;letter-spacing:0.179px;color:#5a5a5a;font-weight:normal;-webkit-text-stroke:0.3px #5a5a5a;">Late Fee</div>
<div class="t" style="left:2649.00px;top:1143.96px;font-size:31px;line-height:31px;letter-spacing:1.575px;color:#222222;font-weight:normal;-webkit-text-stroke:0.5px #222222;">$40.00</div>
<div class="b" style="left:625px;top:1253px;width:36px;height:36px;border:2px solid #d6d6d6;border-radius:8px;box-sizing:border-box;background:#fff;box-shadow:0 1px 2px rgba(0,0,0,0.06)"></div>
<div class="t" style="left:755.00px;top:1255.96px;font-size:31px;line-height:31px;letter-spacing:1.141px;color:#222222;font-weight:normal;-webkit-text-stroke:0.3px #222222;">3/12/2023</div>
<div class="b" style="left:1010px;top:1248px;width:48px;height:48px;background:#d08872;border-radius:9px"></div>
<div class="t" style="left:1025.31px;top:1259.66px;font-size:26px;line-height:26px;color:#ffffff;font-weight:normal;-webkit-text-stroke:0.2px #ffffff;">V</div>
<div class="t" style="left:1075.00px;top:1242.66px;font-size:26px;line-height:26px;letter-spacing:0.712px;color:#1f1f1f;font-weight:normal;-webkit-text-stroke:0.5px #1f1f1f;">Ann &amp; James Vance</div>
<div class="t" style="left:1074.00px;top:1279.42px;font-size:24.5px;line-height:24.5px;letter-spacing:0.671px;color:#5a5a5a;font-weight:normal;-webkit-text-stroke:0.3px #5a5a5a;">1257 Evergreen Circle</div>
<div class="t" style="left:1689.00px;top:1255.96px;font-size:31px;line-height:31px;letter-spacing:1.333px;color:#222222;font-weight:normal;-webkit-text-stroke:0.5px #222222;">$280.00</div>
<div class="t" style="left:1907.25px;top:1243.66px;font-size:26px;line-height:26px;letter-spacing:0.653px;color:#1f1f1f;font-weight:normal;-webkit-text-stroke:0.5px #1f1f1f;">Assessment Late Fee</div>
<div class="t" style="left:1905.25px;top:1278.67px;font-size:24.5px;line-height:24.5px;letter-spacing:0.179px;color:#5a5a5a;font-weight:normal;-webkit-text-stroke:0.3px #5a5a5a;">Late Fee</div>
<div class="t" style="left:2649.00px;top:1255.96px;font-size:31px;line-height:31px;letter-spacing:1.575px;color:#222222;font-weight:normal;-webkit-text-stroke:0.5px #222222;">$40.00</div>
</body></html>
